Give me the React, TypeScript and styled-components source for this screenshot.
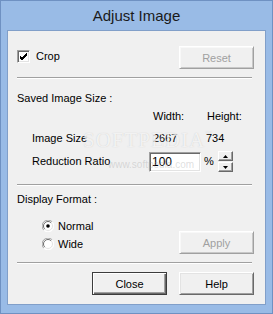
import styled, { createGlobalStyle } from 'styled-components';
import { useState } from 'react';

const GlobalStyle = createGlobalStyle`
  html, body {
    margin: 0;
    padding: 0;
    background: #ffffff;
  }
  body {
    font-family: "Liberation Sans", Arial, sans-serif;
  }
`;

const Check = ({ checked }: { checked: boolean }) => (
  <CheckBox>
    {checked && (
      <svg width="9" height="9" viewBox="0 0 9 9">
        <path d="M1 4 L3 6 L8 1 M1 5 L3 7 L8 2 M1 6 L3 8 L8 3" stroke="#000" strokeWidth="1" fill="none" />
      </svg>
    )}
  </CheckBox>
);

const Radio = ({ selected }: { selected: boolean }) => (
  <svg width="12" height="12" viewBox="0 0 12 12">
    <circle cx="6" cy="6" r="5.5" fill="#ffffff" />
    <path d="M1.8 10.2 A5.5 5.5 0 0 1 10.2 1.8" stroke="#a0a0a0" strokeWidth="1" fill="none" />
    <path d="M10.2 1.8 A5.5 5.5 0 0 1 1.8 10.2" stroke="#ffffff" strokeWidth="1" fill="none" />
    <path d="M2.8 9.2 A4.5 4.5 0 0 1 9.2 2.8" stroke="#696969" strokeWidth="1" fill="none" />
    <path d="M9.2 2.8 A4.5 4.5 0 0 1 2.8 9.2" stroke="#e3e3e3" strokeWidth="1" fill="none" />
    {selected && <circle cx="6" cy="6" r="1.8" fill="#000" />}
  </svg>
);

const App = () => {
  const [crop, setCrop] = useState(true);
  const [format, setFormat] = useState<'normal' | 'wide'>('normal');
  const [ratio, setRatio] = useState('100');

  return (
    <>
      <GlobalStyle />
      <Window>
        <TitleBar>Adjust Image</TitleBar>
        <Client>
          <TopRow>
            <CheckLabel onClick={() => setCrop(!crop)}>
              <Check checked={crop} />
              <span>Crop</span>
            </CheckLabel>
            <Button disabled>Reset</Button>
          </TopRow>

          <Separator />
          <SectionLabel>Saved Image Size :</SectionLabel>

          <SizeGrid>
            <Cell />
            <Cell $pad={4}>Width:</Cell>
            <Cell $pad={3}>Height:</Cell>

            <Cell>Image Size</Cell>
            <Cell $pad={4}>2667</Cell>
            <Cell $pad={2}>734</Cell>

            <Cell $center>Reduction Ratio</Cell>
            <Cell $center>
              <Input value={ratio} onChange={(e) => setRatio(e.target.value)} />
            </Cell>
            <Cell $center>
              <Percent>%</Percent>
              <Spinner>
                <SpinButton>
                  <svg width="5" height="3" viewBox="0 0 5 3"><path d="M2.5 0 L5 3 L0 3 Z" fill="#000" /></svg>
                </SpinButton>
                <SpinButton>
                  <svg width="5" height="3" viewBox="0 0 5 3"><path d="M0 0 L5 0 L2.5 3 Z" fill="#000" /></svg>
                </SpinButton>
              </Spinner>
            </Cell>
          </SizeGrid>

          <Separator $gap={12} />
          <SectionLabel $gap={7}>Display Format :</SectionLabel>

          <FormatRow>
            <RadioList>
              <RadioRow onClick={() => setFormat('normal')}>
                <Radio selected={format === 'normal'} />
                <span>Normal</span>
              </RadioRow>
              <RadioRow onClick={() => setFormat('wide')}>
                <Radio selected={format === 'wide'} />
                <span>Wide</span>
              </RadioRow>
            </RadioList>
            <ApplyButton disabled>Apply</ApplyButton>
          </FormatRow>

          <Separator />
          <ButtonRow>
            <Button $default>Close</Button>
            <Button>Help</Button>
          </ButtonRow>
        </Client>

        <Watermark>
          <Brand>SOFTPEDIA<sup>™</sup></Brand>
          <Site>www.softpedia.com</Site>
        </Watermark>
      </Window>
    </>
  );
};

export default App;

const Window = styled.div`
  position: relative;
  box-sizing: border-box;
  width: 273px;
  height: 314px;
  background-color: #99bbe6;
  border: 1px solid #6f91c2;
  padding: 0 6px 8px;
  display: flex;
  flex-direction: column;
  overflow: hidden;
`;

const TitleBar = styled.div`
  height: 29px;
  display: flex;
  align-items: center;
  justify-content: center;
  font-size: 15px;
  line-height: 17px;
  color: #1a1a1a;
`;

const Client = styled.div`
  background-color: #f0f0f0;
  border: 1px solid #819fc9;
  padding: 15px 11px 9px 9px;
  display: flex;
  flex-direction: column;
  font-size: 11px;
  line-height: 13px;
  color: #000;
`;

const TopRow = styled.div`
  display: flex;
  align-items: center;
  justify-content: space-between;
  height: 23px;
`;

const CheckLabel = styled.label`
  display: flex;
  align-items: center;
  gap: 6px;
  cursor: default;
  margin-top: -2px;
`;

const CheckBox = styled.span`
  box-sizing: border-box;
  width: 13px;
  height: 13px;
  background: #fff;
  border-style: solid;
  border-width: 1px;
  border-color: #a0a0a0 #fff #fff #a0a0a0;
  box-shadow: inset 1px 1px #696969, inset -1px -1px #e3e3e3;
  display: flex;
  align-items: center;
  justify-content: center;
`;

const Button = styled.button<{ $default?: boolean }>`
  box-sizing: border-box;
  width: 75px;
  height: 23px;
  padding: 0;
  font-family: "Liberation Sans", Arial, sans-serif;
  font-size: 11px;
  color: #000;
  background: #f0f0f0;
  border: 1px solid;
  border-color: ${(p) => (p.$default ? '#3c3c3c' : '#fff #696969 #696969 #fff')};
  box-shadow: ${(p) =>
    p.$default
      ? 'inset 1px 1px #fff, inset -1px -1px #696969, inset -2px -2px #a0a0a0'
      : 'inset 1px 1px #e3e3e3, inset -1px -1px #a0a0a0'};

  &:disabled {
    color: #a0a0a0;
    border-color: #fff #a0a0a0 #a0a0a0 #fff;
    box-shadow: inset 1px 1px #f8f8f8, inset -1px -1px #c8c8c8;
  }
`;

const ApplyButton = styled(Button)`
  margin-top: 14px;
`;

const Separator = styled.div<{ $gap?: number }>`
  margin-top: ${(p) => p.$gap ?? 8}px;
  margin-right: 2px;
  border-top: 1px solid #a0a0a0;
  border-bottom: 1px solid #fff;
`;

const SectionLabel = styled.div<{ $gap?: number }>`
  margin-top: ${(p) => p.$gap ?? 13}px;
`;

const SizeGrid = styled.div`
  margin: 5px 0 0 15px;
  display: grid;
  grid-template-columns: 117px 55px auto;
  grid-template-rows: 22px 19px 21px;
`;

const Cell = styled.div<{ $pad?: number; $center?: boolean }>`
  display: flex;
  align-items: ${(p) => (p.$center ? 'center' : 'flex-start')};
  padding-left: ${(p) => p.$pad ?? 0}px;
`;

const Input = styled.input`
  box-sizing: border-box;
  width: 52px;
  height: 20px;
  padding: 0 2px;
  font-family: "Liberation Sans", Arial, sans-serif;
  font-size: 12px;
  color: #000;
  background: #fff;
  border: 1px solid;
  border-color: #a0a0a0 #fff #fff #a0a0a0;
  box-shadow: inset 1px 1px #696969, inset -1px -1px #e3e3e3;
  outline: none;
`;

const Percent = styled.span`
  margin-right: 4px;
`;

const Spinner = styled.div`
  display: flex;
  flex-direction: column;
  margin-top: 1px;
`;

const SpinButton = styled.div`
  box-sizing: border-box;
  width: 15px;
  height: 10px;
  margin-bottom: 1px;
  background: #f0f0f0;
  border: 1px solid;
  border-color: #fff #696969 #696969 #fff;
  box-shadow: inset -1px -1px #a0a0a0;
  display: flex;
  align-items: center;
  justify-content: center;
`;

const FormatRow = styled.div`
  margin-top: 11px;
  display: flex;
  justify-content: space-between;
  align-items: flex-start;
`;

const RadioList = styled.div`
  margin-left: 25px;
  display: flex;
  flex-direction: column;
`;

const RadioRow = styled.label`
  height: 18px;
  display: flex;
  align-items: center;
  gap: 4px;
  cursor: default;
`;

const ButtonRow = styled.div`
  margin-top: 8px;
  display: flex;
  justify-content: flex-end;
  gap: 12px;
`;

const Watermark = styled.div`
  position: absolute;
  left: 82px;
  top: 128px;
  display: flex;
  flex-direction: column;
  align-items: center;
  pointer-events: none;
`;

const Brand = styled.div`
  font-family: "Liberation Serif", "Times New Roman", serif;
  font-size: 21px;
  line-height: 22px;
  letter-spacing: 1px;
  color: rgba(255, 255, 255, 0.75);
  text-shadow: 0 0 1px rgba(120, 120, 120, 0.35);

  sup {
    font-size: 7px;
    vertical-align: top;
    line-height: 10px;
  }
`;

const Site = styled.div`
  margin-top: 8px;
  margin-left: 6px;
  font-size: 10px;
  line-height: 11px;
  color: rgba(160, 160, 160, 0.35);
`;
